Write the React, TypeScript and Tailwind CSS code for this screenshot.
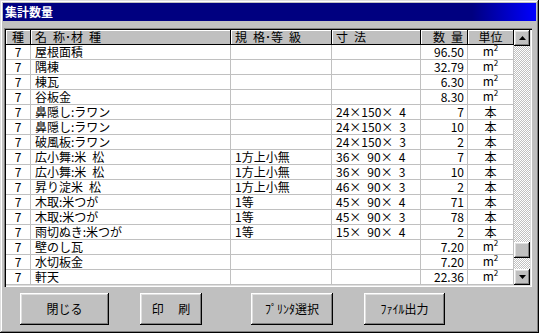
import React from 'react'

type Row = {
  kind: string
  name: string
  grade: string
  size: string
  qty: string
  unit: 'm2' | 'hon'
}

// half-width gaps are en spaces (6px at 12px), as in the fixed-pitch original
const rows: Row[] = [
  { kind: '7', name: '屋根面積', grade: '', size: '', qty: '96.50', unit: 'm2' },
  { kind: '7', name: '隅棟', grade: '', size: '', qty: '32.79', unit: 'm2' },
  { kind: '7', name: '棟瓦', grade: '', size: '', qty: '6.30', unit: 'm2' },
  { kind: '7', name: '谷板金', grade: '', size: '', qty: '8.30', unit: 'm2' },
  { kind: '7', name: '鼻隠し:ラワン', grade: '', size: '24×150×\u20024', qty: '7', unit: 'hon' },
  { kind: '7', name: '鼻隠し:ラワン', grade: '', size: '24×150×\u20023', qty: '10', unit: 'hon' },
  { kind: '7', name: '破風板:ラワン', grade: '', size: '24×150×\u20023', qty: '2', unit: 'hon' },
  { kind: '7', name: '広小舞:米\u2002松', grade: '1方上小無', size: '36×\u200290×\u20024', qty: '7', unit: 'hon' },
  { kind: '7', name: '広小舞:米\u2002松', grade: '1方上小無', size: '36×\u200290×\u20023', qty: '10', unit: 'hon' },
  { kind: '7', name: '昇り淀米\u2002松', grade: '1方上小無', size: '46×\u200290×\u20023', qty: '2', unit: 'hon' },
  { kind: '7', name: '木取:米つが', grade: '1等', size: '45×\u200290×\u20024', qty: '71', unit: 'hon' },
  { kind: '7', name: '木取:米つが', grade: '1等', size: '45×\u200290×\u20023', qty: '78', unit: 'hon' },
  { kind: '7', name: '雨切ぬき:米つが', grade: '1等', size: '15×\u200290×\u20024', qty: '2', unit: 'hon' },
  { kind: '7', name: '壁のし瓦', grade: '', size: '', qty: '7.20', unit: 'm2' },
  { kind: '7', name: '水切板金', grade: '', size: '', qty: '7.20', unit: 'm2' },
  { kind: '7', name: '軒天', grade: '', size: '', qty: '22.36', unit: 'm2' },
]

const raised =
  'bg-[#c0c0c0] shadow-[inset_-1px_-1px_0_#000,inset_1px_1px_0_#fff,inset_-2px_-2px_0_#808080,inset_2px_2px_0_#dfdfdf]'

const headCell =
  'h-full flex items-center shrink-0 bg-[#c0c0c0] border-r border-b border-black shadow-[inset_1px_1px_0_#fff]'

const cell = 'shrink-0 flex items-center border-r border-b border-[#c0c0c0]'

const dither = 'bg-[repeating-conic-gradient(#c0c0c0_0_25%,#fff_0_50%)] bg-[length:2px_2px]'

function Unit({ unit }: { unit: Row['unit'] }) {
  if (unit === 'hon') return <span>本</span>
  return (
    <span>
      m<span className="text-[8px] relative top-[-5px]">2</span>
    </span>
  )
}

function Arrow({ up }: { up?: boolean }) {
  return (
    <svg width="7" height="4" viewBox="0 0 7 4">
      <polygon points={up ? '3.5,0 7,4 0,4' : '0,0 7,0 3.5,4'} fill="#000" />
    </svg>
  )
}

export default function App() {
  return (
    <div className="w-[539px] h-[333px] bg-[#c0c0c0] p-[3px] flex flex-col text-black text-[12px] font-['Noto_Sans_CJK_JP',sans-serif] shadow-[inset_-1px_-1px_0_#000,inset_1px_1px_0_#dfdfdf,inset_-2px_-2px_0_#808080,inset_2px_2px_0_#fff]">
      {/* title bar */}
      <div className="h-[18px] shrink-0 flex items-center pl-[2px] text-white font-bold text-[12px] bg-[linear-gradient(90deg,#000080_88%,#0000ff)]">
        集計数量
      </div>

      {/* table frame */}
      <div className="mt-[7px] ml-[1px] mr-[4px] h-[259px] p-[2px] flex shrink-0 shadow-[inset_1px_1px_0_#808080,inset_2px_2px_0_#000,inset_-1px_-1px_0_#fff,inset_-2px_-2px_0_#dfdfdf]">
        <div className="flex-1 flex flex-col bg-white min-w-0">
          <div className="h-[15px] flex leading-[14px] whitespace-pre">
            <div className={`${headCell} w-[25px] justify-center`}>種</div>
            <div className={`${headCell} w-[200px] pl-[4px]`}>名{'\u2002'}称･材{'\u2002'}種</div>
            <div className={`${headCell} w-[101px] pl-[4px]`}>規{'\u2002'}格･等{'\u2002'}級</div>
            <div className={`${headCell} w-[89px] pl-[4px]`}>寸{'\u2002'}法</div>
            <div className={`${headCell} w-[47px] justify-end pr-[4px]`}>数{'\u2002'}量</div>
            <div className={`${headCell} flex-1 justify-center`}>単位</div>
          </div>
          {rows.map((r, i) => (
            <div key={i} className="h-[15px] flex leading-[14px] whitespace-pre">
              <div className={`${cell} w-[25px] justify-center`}>{r.kind}</div>
              <div className={`${cell} w-[200px] pl-[4px]`}>{r.name}</div>
              <div className={`${cell} w-[101px] pl-[4px]`}>{r.grade}</div>
              <div className={`${cell} w-[89px] pl-[4px]`}>{r.size}</div>
              <div className={`${cell} w-[47px] justify-end pr-[3px]`}>{r.qty}</div>
              <div className={`${cell} flex-1 justify-center`}>
                <Unit unit={r.unit} />
              </div>
            </div>
          ))}
        </div>

        {/* scrollbar */}
        <div className="w-[16px] shrink-0 flex flex-col">
          <div className={`${raised} h-[16px] shrink-0 flex items-center justify-center`}>
            <Arrow up />
          </div>
          <div className={`${dither} h-[196px] shrink-0`} />
          <div className={`${raised} h-[16px] shrink-0`} />
          <div className={`${dither} flex-1`} />
          <div className={`${raised} h-[16px] shrink-0 flex items-center justify-center`}>
            <Arrow />
          </div>
        </div>
      </div>

      {/* buttons */}
      <div className="mt-[6px] h-[32px] flex shrink-0">
        <button className={`${raised} ml-[17px] w-[89px] h-full`}>閉じる</button>
        <button className={`${raised} ml-[31px] w-[62px] h-full whitespace-pre`}>印　 刷</button>
        <button className={`${raised} ml-[49px] w-[82px] h-full`}>ﾌﾟﾘﾝﾀ選択</button>
        <button className={`${raised} ml-[31px] w-[81px] h-full`}>ﾌｧｲﾙ出力</button>
      </div>
    </div>
  )
}
